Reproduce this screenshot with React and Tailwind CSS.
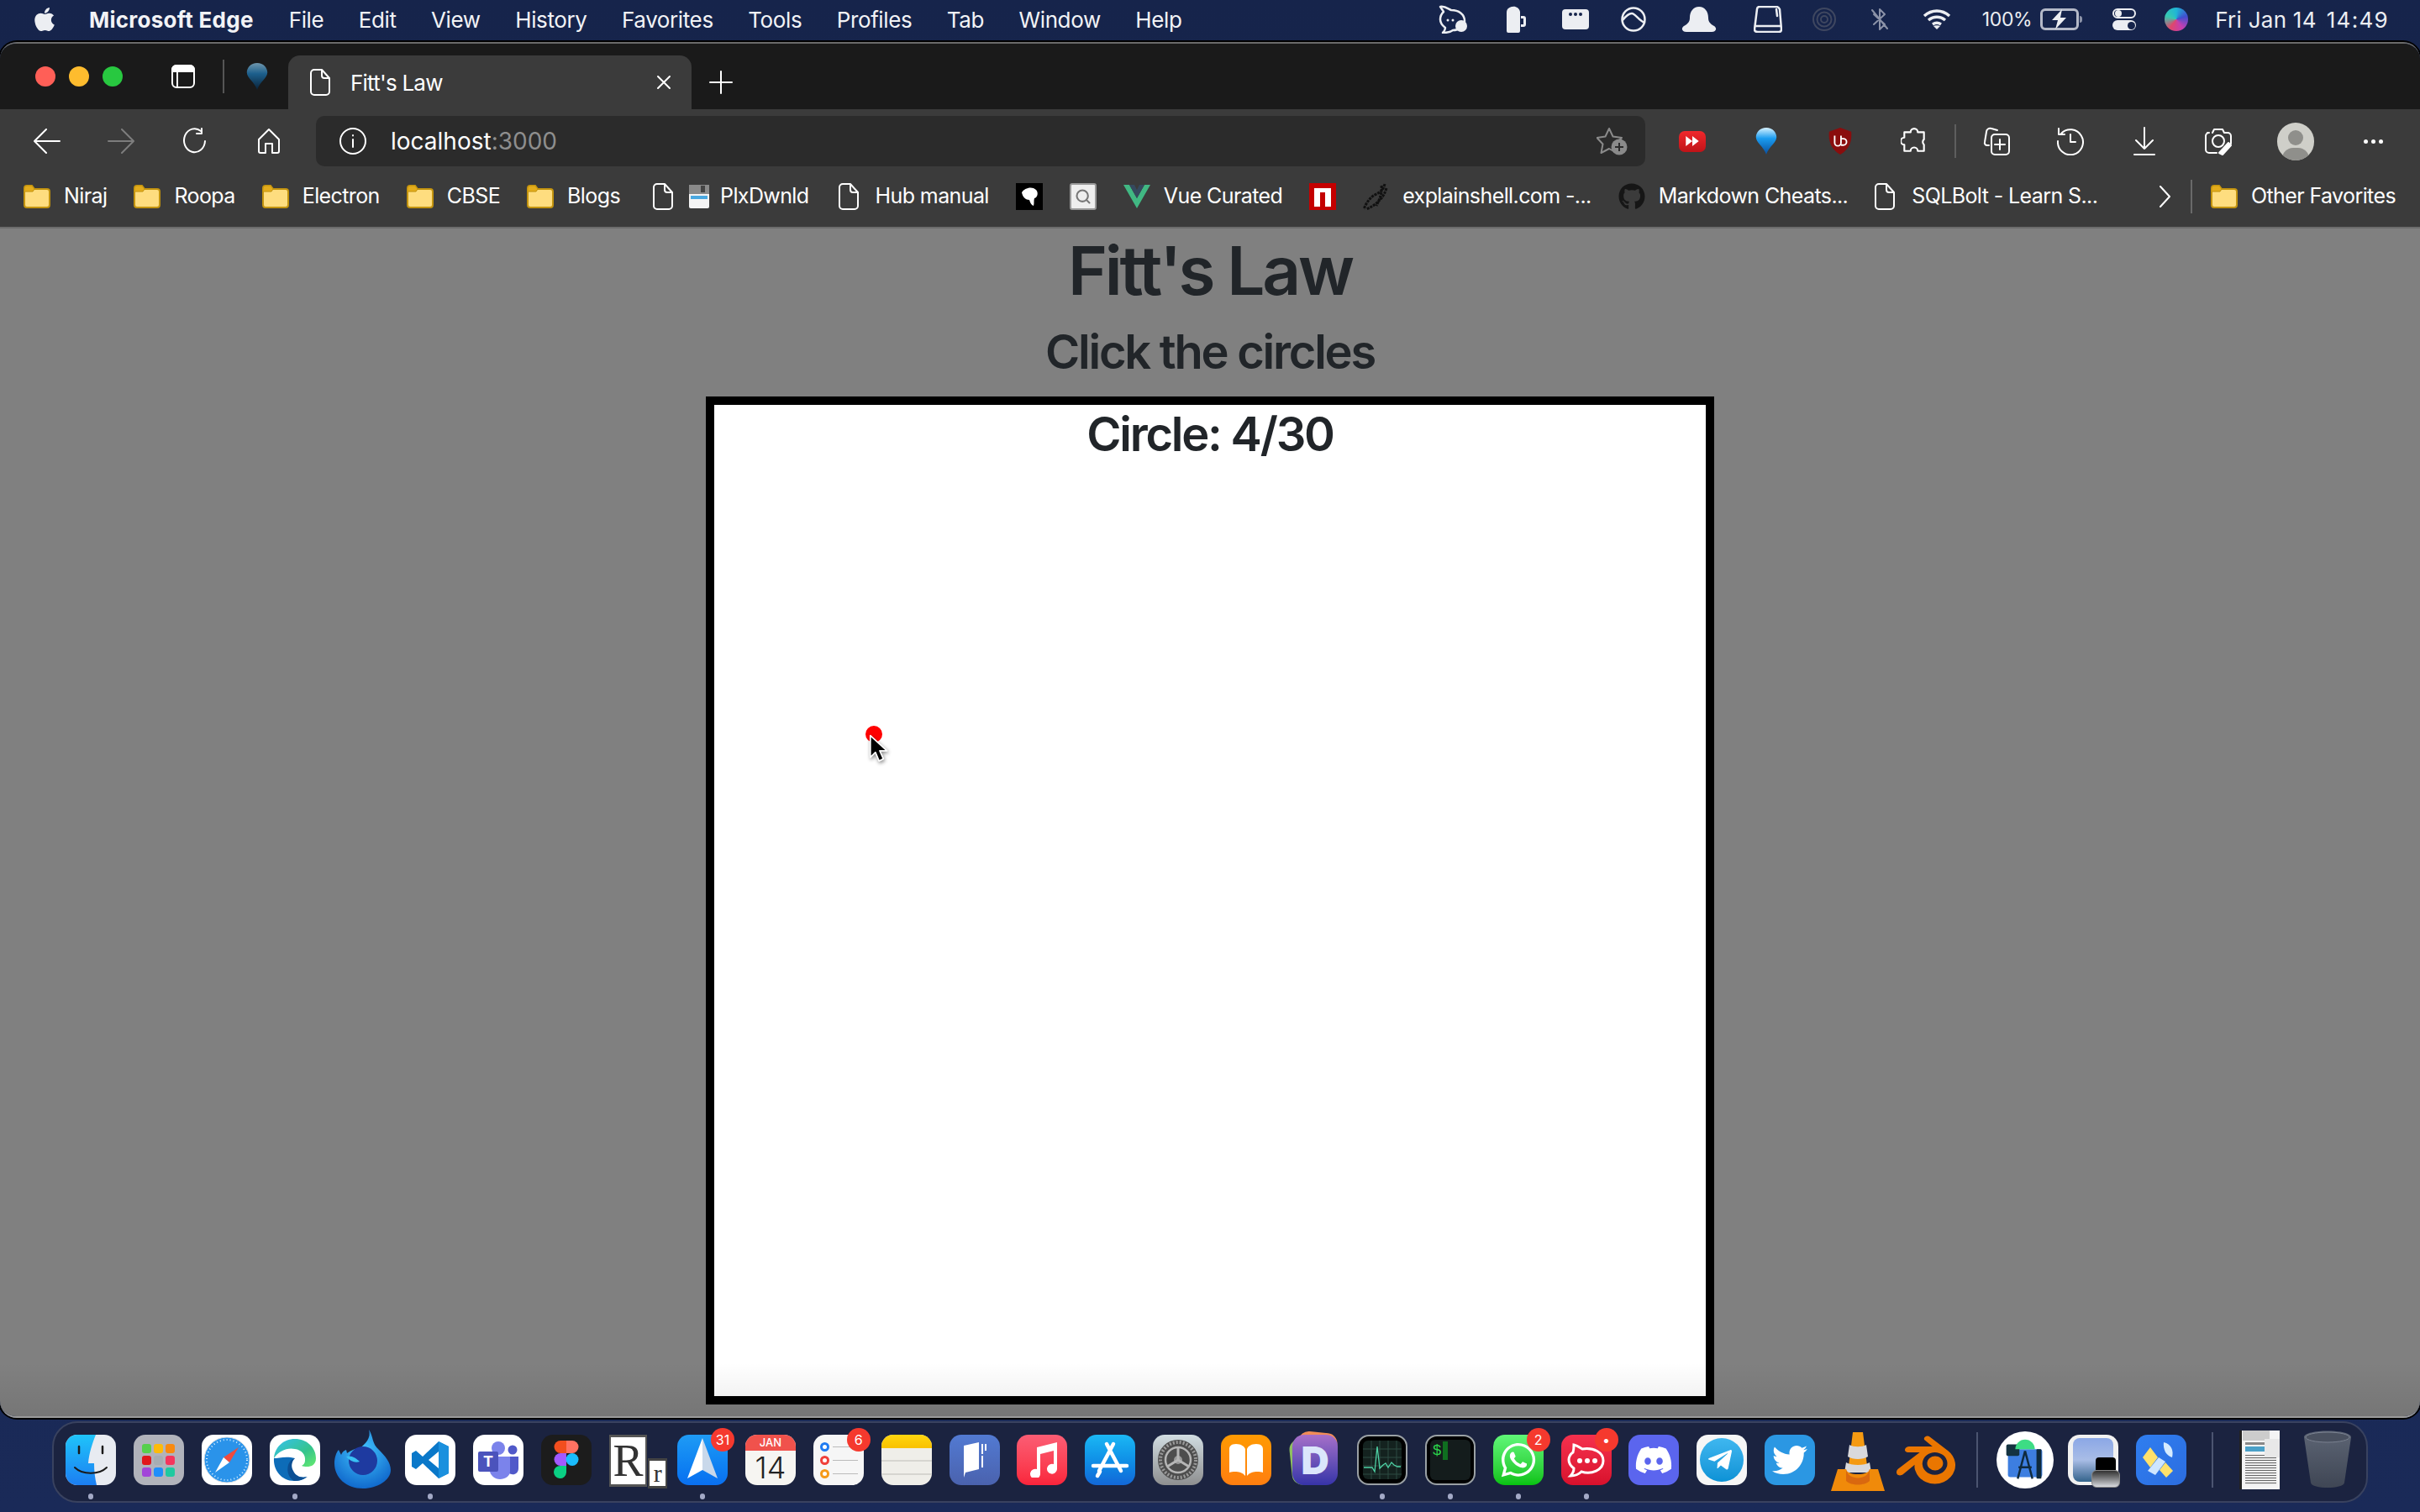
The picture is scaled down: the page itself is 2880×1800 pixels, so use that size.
import React from 'react'
import { FaApple, FaDiscord, FaGithub, FaTwitter, FaTelegramPlane, FaWhatsapp } from 'react-icons/fa'
import { SiBlender } from 'react-icons/si'
import { Search } from 'lucide-react'

const Line = ({ w, h, vb, children, className = '', sw = 2 }) => (
  <svg width={w} height={h} viewBox={vb || `0 0 ${w} ${h}`} fill="none" stroke="currentColor" strokeWidth={sw} strokeLinecap="round" strokeLinejoin="round" className={`shrink-0 ${className}`}>
    {children}
  </svg>
)

const DocIcon = () => (
  <Line w={24} h={32}>
    <path d="M5 1h9l9 10v16a4 4 0 0 1-4 4H5a4 4 0 0 1-4-4V5a4 4 0 0 1 4-4zM14 1v7a3 3 0 0 0 3 3h6" />
  </Line>
)

const Folder = () => (
  <svg width="32" height="28" viewBox="0 0 32 28" className="shrink-0">
    <path d="M1 4a3 3 0 0 1 3-3h6l3 4h15a3 3 0 0 1 3 3v16a3 3 0 0 1-3 3H4a3 3 0 0 1-3-3z" fill="#fedd7f" stroke="#c2930f" strokeWidth="2" />
    <path d="M1 9V4a3 3 0 0 1 3-3h6l3 4-2 3H2z" fill="#e3ac1c" stroke="#c2930f" strokeWidth="1" />
  </svg>
)

const Balloon = ({ dim }) => (
  <svg width="26" height="32" viewBox="0 0 26 34" className="shrink-0">
    <defs>
      <linearGradient id={dim ? 'ballonDim' : 'balloon'} x1="0" y1="0" x2="0" y2="1">
        <stop offset="0" stopColor={dim ? '#6f97ad' : '#d6f2ff'} />
        <stop offset="0.4" stopColor={dim ? '#1c5f8c' : '#1a9cf0'} />
        <stop offset="1" stopColor={dim ? '#0a2238' : '#0a4f9e'} />
      </linearGradient>
    </defs>
    <path d="M13 0C5 0 0 6 0 12c0 7 9 11 13 22 4-11 13-15 13-22C26 6 21 0 13 0z" fill={`url(#${dim ? 'ballonDim' : 'balloon'})`} />
  </svg>
)

const menuLeft = ['File', 'Edit', 'View', 'History', 'Favorites', 'Tools', 'Profiles', 'Tab', 'Window', 'Help']

const MenuBar = () => (
  <div className="flex h-[48px] shrink-0 items-center pb-[2px] text-[26px] tracking-[-0.015em] text-[#f2f3f6] [font-family:Inter,sans-serif]">
    <FaApple className="ml-[39px] h-[32px] w-[28px] shrink-0 text-[#eceef2]" />
    <span className="ml-[39px] font-bold tracking-[0.01em]">Microsoft Edge</span>
    <div className="ml-[42px] flex gap-[41.5px]">
      {menuLeft.map((m) => <span key={m}>{m}</span>)}
    </div>
    <div className="ml-auto flex items-center pr-[37px] text-[#eceef2]">
      <Line w={38} h={34} sw={2.5}>
        <path d="M4 2c6-1 10 3 13 4 9 0 16 5 16 13 0 7-7 11-14 11-4 3-9 3-12 3 2-2 3-4 3-6-4-3-6-6-6-10 0-4 2-7 4-9-1-2-3-4-4-6z" />
        <circle cx="29" cy="25" r="7" fill="currentColor" stroke="none" />
        <circle cx="13" cy="18" r="1.5" fill="currentColor" stroke="none" />
        <circle cx="19" cy="18" r="1.5" fill="currentColor" stroke="none" />
      </Line>
      <svg width="26" height="32" viewBox="0 0 26 32" fill="currentColor" className="ml-[43px] shrink-0">
        <path d="M2 8c0-5 4-7 7-7 3-1 8 1 9 6v23a2 2 0 0 1-2 2H4a2 2 0 0 1-2-2z" />
        <path d="M19 12h3a3 3 0 0 1 3 3v7a3 3 0 0 1-3 3h-3v-3h3v-7h-3z" />
      </svg>
      <div className="ml-[42px] flex h-[24px] w-[32px] shrink-0 items-start justify-center gap-[2px] rounded-[4px] bg-[#eceef2] pt-[4px]">
        <i className="h-[4px] w-[4px] rounded-full bg-[#16244b]" />
        <i className="h-[4px] w-[4px] rounded-full bg-[#16244b]" />
        <i className="h-[4px] w-[4px] rounded-full bg-[#16244b]" />
      </div>
      <Line w={30} h={30} className="ml-[38px]" sw={2.5}>
        <circle cx="15" cy="15" r="13.5" />
        <path d="M2 16c4-5 8-8 11-8 4 0 8 8 15 11" />
      </Line>
      <svg width="44" height="30" viewBox="0 0 44 30" fill="currentColor" className="ml-[41px] shrink-0">
        <path d="M22 0c7 0 11 6 11 13 0 5 2 7 7 10 4 3 2 7-3 7H7c-5 0-7-4-3-7 5-3 7-5 7-10C11 6 15 0 22 0z" />
      </svg>
      <Line w={34} h={32} className="ml-[43px]" sw={2.5}>
        <path d="M7 1h20c2 0 3 1 4 3l2 24c0 2-1 3-3 3H5c-2 0-4-1-4-3L4 4c0-2 1-3 3-3z" />
        <path d="M2 24h30M27 4l1 8" />
      </Line>
      <Line w={28} h={28} className="ml-[36px] text-[#3f4760]">
        <circle cx="14" cy="14" r="13" />
        <circle cx="14" cy="14" r="8.5" />
        <circle cx="14" cy="14" r="4" />
      </Line>
      <Line w={22} h={26} className="ml-[41px] text-[#8c93a8]">
        <path d="M4 7l13 12-6 6V1l6 6L4 19M2 2l18 22" />
      </Line>
      <svg width="34" height="24" viewBox="0 0 34 24" fill="none" stroke="currentColor" strokeWidth="3.5" className="ml-[40px] shrink-0">
        <path d="M2 8c9-8 21-8 30 0M7 13c6-5 14-5 20 0M12 18c3-2 7-2 10 0" />
        <path d="M17 24l-4-4c2-1 6-1 8 0z" fill="currentColor" stroke="none" />
      </svg>
      <span className="ml-[37px] text-[23px]">100%</span>
      <div className="relative ml-[10px] flex h-[26px] w-[46px] shrink-0 items-center justify-center rounded-[6px] border-[3px] border-[#b4b9c8]">
        <svg width="24" height="24" viewBox="0 0 24 24" fill="currentColor"><path d="M15 0L3 13h7l-3 11 13-14h-7z" /></svg>
        <i className="absolute right-[-7px] h-[8px] w-[3px] rounded-r bg-[#8c93a8]" />
      </div>
      <div className="ml-[40px] flex shrink-0 flex-col gap-[2px]">
        <div className="flex h-[12px] w-[28px] items-center justify-start rounded-full border-2 border-[#eceef2] pl-[1px]"><i className="h-[8px] w-[8px] rounded-full bg-[#eceef2]" /></div>
        <div className="flex h-[12px] w-[28px] items-center justify-end rounded-full bg-[#eceef2] pr-[1px]"><i className="h-[9px] w-[9px] rounded-full bg-[#16244b]" /></div>
      </div>
      <div className="ml-[34px] h-[28px] w-[28px] shrink-0 rounded-full bg-[conic-gradient(#1fb6d6,#3f4fd0,#c43fb0,#e0466c,#36c9b0,#1fb6d6)]" />
      <span className="ml-[32px] tracking-[0.01em]">Fri Jan 14</span>
      <span className="ml-[12px] tracking-[0.05em]">14:49</span>
    </div>
  </div>
)

const TabStrip = () => (
  <div className="flex h-[78px] shrink-0 bg-[#1a1a1a] pt-[14px] text-white">
    <div className="ml-[42px] flex h-[50px] items-center gap-[16px]">
      <i className="h-[24px] w-[24px] rounded-full bg-[#ff5f57]" />
      <i className="h-[24px] w-[24px] rounded-full bg-[#febc2e]" />
      <i className="h-[24px] w-[24px] rounded-full bg-[#28c840]" />
    </div>
    <div className="ml-[58px] flex h-[50px] items-center">
      <svg width="28" height="28" viewBox="0 0 28 28" fill="none" stroke="currentColor" strokeWidth="2">
        <rect x="1" y="1" width="26" height="26" rx="5" />
        <path d="M1 8h26" />
        <path d="M1 6a5 5 0 0 1 5-5h16a5 5 0 0 1 5 5v2H1z" fill="#fff" />
        <path d="M7 8v19" />
      </svg>
      <i className="ml-[33px] h-[40px] w-[2px] bg-[#555]" />
      <div className="ml-[26px]"><Balloon dim /></div>
    </div>
    <div className="ml-[24px] flex h-[64px] w-[480px] items-center rounded-t-[14px] bg-[#3b3b3b] pl-[26px] pr-[24px] [font-family:Inter,sans-serif]">
      <DocIcon />
      <span className="ml-[24px] text-[26px] tracking-[-0.03em]">Fitt's Law</span>
      <Line w={18} h={18} className="ml-auto"><path d="M2 2l14 14M16 2L2 16" /></Line>
    </div>
    <Line w={28} h={28} className="ml-[21px] mt-[18px]"><path d="M14 1v26M1 14h26" /></Line>
  </div>
)

const Toolbar = () => (
  <div className="flex h-[72px] shrink-0 items-center bg-[#3b3b3b] pl-[40px] pt-[4px] text-white">
    <div className="flex items-center gap-[56px]">
      <Line w={32} h={30}><path d="M31 15H2M15 1L1 15l14 14" /></Line>
      <Line w={32} h={30} className="text-[#7d7d7d]"><path d="M1 15h29M17 1l14 14-14 14" /></Line>
      <Line w={32} h={32}><path d="M28 16a12.5 14 0 1 1-5-12M24 1v6h-6" /></Line>
      <Line w={32} h={32}><path d="M16 2L4 14v14a2 2 0 0 0 2 2h6V19h8v11h6a2 2 0 0 0 2-2V14z" /></Line>
    </div>
    <div className="ml-[40px] flex h-[60px] w-[1582px] shrink-0 items-center rounded-[10px] bg-[#2b2b2b] pl-[28px] pr-[21px] [font-family:Inter,sans-serif]">
      <Line w={32} h={32}>
        <circle cx="16" cy="16" r="15" />
        <path d="M16 14v9M16 9v.5" />
      </Line>
      <span className="ml-[29px] text-[28px]">localhost<span className="text-[#8e8e8e]">:3000</span></span>
      <svg width="37" height="34" viewBox="0 0 37 34" fill="none" className="ml-auto">
        <path d="M15 2l4.500 9.500 10.500 1.500-7.500 7.500 1.500 10.500-9-5-9.500 5 2-10.500L0.500 13l10-1.500z" stroke="#8a8a8a" strokeWidth="2" strokeLinejoin="round" />
        <circle cx="27" cy="24" r="9.500" fill="#8a8a8a" />
        <path d="M27 19v10M22 24h10" stroke="#2b2b2b" strokeWidth="2" />
      </svg>
    </div>
    <div className="ml-[40px] flex items-center gap-[56px]">
      <div className="flex h-[25px] w-[32px] items-center justify-center rounded-[7px] bg-gradient-to-b from-[#f0282c] to-[#c01318]">
        <svg width="16" height="12" viewBox="0 0 18 14" fill="#fff"><path d="M0 0l9 7-9 7zM9 0l9 7-9 7z" /></svg>
      </div>
      <div className="flex w-[32px] justify-center"><Balloon /></div>
      <svg width="32" height="32" viewBox="0 0 32 34">
        <path d="M16 0l14 5c1 12-2 22-14 29C4 27 1 17 2 5z" fill="#8a0d0d" />
        <path d="M9 10v9a4 4 0 0 0 8 0v-9M17 14h3a4 4 0 0 1 0 8h-3" fill="none" stroke="#fff" strokeWidth="2" />
      </svg>
      <Line w={32} h={34} vb="0 0 30 32">
        <path d="M11 6a4 4 0 0 1 8 0h7v8a4 4 0 0 0 0 6v7h-7a4 4 0 0 0-8 0H4v-7a4 4 0 0 1 0-8V6z" />
      </Line>
    </div>
    <i className="ml-[32px] h-[40px] w-[2px] bg-[#5e5e5e]" />
    <div className="ml-[32px] flex items-center gap-[56px]">
      <Line w={32} h={34}>
        <path d="M7 22H5a3 3 0 0 1-3-4l2-12c0-3 3-5 6-4l7 2" />
        <rect x="10" y="9" width="21" height="24" rx="4" />
        <path d="M20 15v12M14 21h12" />
      </Line>
      <Line w={32} h={34}>
        <path d="M5 8a15 15 0 1 1-4 9M2 2v7h7M16 9v9h6" />
      </Line>
      <Line w={32} h={34}>
        <path d="M16 1v25M6 16l10 10 10-10M4 33h24" />
      </Line>
      <Line w={32} h={34}>
        <path d="M9 7l2-4h10l2 4h4a4 4 0 0 1 4 4v9M3 7h2a4 4 0 0 0-4 4v16a4 4 0 0 0 4 4h9" />
        <circle cx="16" cy="17" r="7" />
        <path d="M17 31l11-12 3 3-10 11z" fill="currentColor" />
      </Line>
    </div>
    <div className="relative ml-[54px] h-[45px] w-[44px] shrink-0 overflow-hidden rounded-full bg-[#cfcfc9]">
      <i className="absolute left-[13px] top-[9px] h-[18px] w-[18px] rounded-full bg-[#8f8f8b]" />
      <i className="absolute left-[6px] top-[30px] h-[26px] w-[32px] rounded-full bg-[#8f8f8b]" />
    </div>
    <div className="ml-[54px] flex w-[32px] justify-center gap-[4px]">
      <i className="h-[5px] w-[5px] rounded-full bg-white" />
      <i className="h-[5px] w-[5px] rounded-full bg-white" />
      <i className="h-[5px] w-[5px] rounded-full bg-white" />
    </div>
  </div>
)

const BlackIcon = () => (
  <div className="flex h-[32px] w-[32px] shrink-0 items-center justify-center bg-black">
    <svg width="26" height="26" viewBox="0 0 26 26" fill="#fff"><path d="M4 8c3-5 12-8 17-3 3 3 2 9-2 10-1 3 0 6-1 9-3-1-4-4-5-7-4 0-8-3-9-9z" /></svg>
  </div>
)

const Mark = ({ children, className = '' }) => (
  <div className={`flex shrink-0 items-center gap-[16px] ${className}`}>{children}</div>
)

const Bookmarks = () => (
  <div className="flex h-[70px] shrink-0 items-center border-b-2 border-[#6c6c6c] bg-[#3b3b3b] pb-[4px] pl-[28px] pr-[29px] text-[25px] tracking-[-0.024em] text-white [font-family:Inter,sans-serif]">
    <div className="flex items-center gap-[32px]">
      {['Niraj', 'Roopa', 'Electron', 'CBSE', 'Blogs'].map((n) => (
        <Mark key={n}><Folder /><span>{n}</span></Mark>
      ))}
      <Mark className="ml-[7px]">
        <DocIcon />
        <svg width="26" height="30" viewBox="0 0 26 30" className="-mr-[4px] ml-[2px]">
          <rect x="1" y="1" width="24" height="28" rx="2" fill="#f4f4f4" />
          <rect x="1" y="1" width="24" height="11" fill="#8a8a8a" />
          <rect x="15" y="2" width="5" height="8" fill="#444" />
          <rect x="3" y="14" width="20" height="4" fill="#4aa8e0" />
        </svg>
        <span>PlxDwnld</span>
      </Mark>
      <Mark className="ml-[3px]"><DocIcon /><span className="ml-[4px]">Hub manual</span></Mark>
      <BlackIcon />
      <div className="flex h-[32px] w-[32px] shrink-0 items-center justify-center rounded-[3px] border-2 border-[#999] bg-[#eee]">
        <Search size={20} color="#777" strokeWidth={2.5} />
      </div>
      <Mark>
        <svg width="32" height="28" viewBox="0 0 32 28" className="shrink-0">
          <path d="M0 0h7l9 16 9-16h7L16 28z" fill="#41b883" />
          <path d="M7 0h6l3 6 3-6h6l-9 16z" fill="#35495e" />
        </svg>
        <span>Vue Curated</span>
      </Mark>
      <div className="flex h-[32px] w-[32px] shrink-0 items-end justify-center bg-[#c40000] pb-[4px]">
        <div className="flex h-[22px] w-[20px] justify-center bg-white pt-[5px]"><i className="h-[17px] w-[6px] bg-[#c40000]" /></div>
      </div>
      <Mark>
        <svg width="31" height="32" viewBox="0 0 31 32" fill="none" stroke="#111" strokeWidth="3" strokeDasharray="3 1" className="shrink-0">
          <path d="M26 1c-2 8-6 10-12 13-5 3-10 9-13 17M28 6c-3 10-7 13-11 17-3 3-8 6-13 8M22 3c1 8-1 14-6 24" />
        </svg>
        <span>explainshell.com -...</span>
      </Mark>
      <Mark><FaGithub className="h-[32px] w-[32px] shrink-0 text-[#161616]" /><span>Markdown Cheats...</span></Mark>
      <Mark><DocIcon /><span className="ml-[4px]">SQLBolt - Learn S...</span></Mark>
    </div>
    <div className="ml-auto flex items-center">
      <Line w={15} h={26}><path d="M2 1l11 12L2 25" /></Line>
      <i className="ml-[23px] h-[40px] w-[2px] bg-[#6a6a6a]" />
      <div className="ml-[22px]"><Mark><Folder /><span>Other Favorites</span></Mark></div>
    </div>
  </div>
)

const Page = () => (
  <div className="relative flex min-h-0 flex-1 flex-col items-center bg-[#808080] pt-[2px] text-[#212529] [font-family:Inter,sans-serif]">
    <h1 className="mb-[16px] text-[80px] font-semibold leading-[96px] tracking-[-0.04em]">Fitt's Law</h1>
    <h3 className="mb-[19px] text-[56px] font-semibold leading-[67px] tracking-[-0.04em]">Click the circles</h3>
    <div className="relative h-[1200px] w-[1200px] shrink-0 border-[10px] border-black bg-white pt-[2px] text-center">
      <div className="text-[56px] font-semibold leading-[67px] tracking-[-0.04em]">Circle: 4/30</div>
      <div className="absolute left-[180px] top-[382px] h-[20px] w-[20px] rounded-full bg-[#ff0000]" />
      <svg width="26" height="38" viewBox="0 0 30 44" className="absolute left-[184px] top-[392px] drop-shadow-[1px_2px_2px_rgba(0,0,0,0.45)]">
        <path d="M2 2v30l7-7 5 12 6-3-5-11h10z" fill="#000" stroke="#fff" strokeWidth="2" strokeLinejoin="round" />
      </svg>
    </div>
    <div className="absolute inset-x-0 bottom-0 h-[64px] bg-gradient-to-b from-transparent to-[rgba(0,0,0,0.08)]" />
  </div>
)

const Tile = ({ className = '', children }) => (
  <div className={`flex h-[60px] w-[60px] items-center justify-center overflow-hidden rounded-[14px] ${className}`}>{children}</div>
)

const Finder = () => (
  <svg width="60" height="60" viewBox="0 0 60 60">
    <defs>
      <linearGradient id="finderL" x1="0" y1="0" x2="0" y2="1"><stop offset="0" stopColor="#1fc4fa" /><stop offset="1" stopColor="#1c7ef2" /></linearGradient>
    </defs>
    <rect width="60" height="60" rx="14" fill="#e8ebf1" />
    <path d="M14 0h22c-4 10-8 22-9 34h7c0 9 1 18 3 26H14A14 14 0 0 1 0 46V14A14 14 0 0 1 14 0z" fill="url(#finderL)" />
    <path d="M16 14v8M44 14v8" stroke="#1a1a1a" strokeWidth="2.5" strokeLinecap="round" />
    <path d="M11 39c9 9 29 9 38 0" stroke="#1a1a1a" strokeWidth="2" fill="none" strokeLinecap="round" />
  </svg>
)

const launchColors = ['bg-[#56d04c]', 'bg-[#fdbb0a]', 'bg-[#f98a10]', 'bg-[#e1161c]', 'bg-[#a7adb2]', 'bg-[#f5355d]', 'bg-[#a245d9]', 'bg-[#1f8efa]', 'bg-[#1fc9a0]']
const Launchpad = () => (
  <Tile className="bg-[#b1b3bb]">
    <div className="grid grid-cols-3 gap-[3px]">
      {launchColors.map((c) => <i key={c} className={`h-[11px] w-[11px] rounded-[3px] ${c}`} />)}
    </div>
  </Tile>
)

const Safari = () => (
  <Tile className="bg-white">
    <svg width="56" height="56" viewBox="0 0 56 56">
      <circle cx="28" cy="28" r="27" fill="#2a93ea" stroke="#d8dde2" />
      <circle cx="28" cy="28" r="24" fill="none" stroke="#d9efff" strokeWidth="2" strokeDasharray="1 3" />
      <path d="M42 13L24 25l7 6z" fill="#f04a3e" />
      <path d="M14 43l10-18 7 6z" fill="#fff" />
    </svg>
  </Tile>
)

const Edge = () => (
  <Tile className="bg-white">
    <svg width="52" height="52" viewBox="0 0 52 52">
      <defs>
        <linearGradient id="edgeG" x1="0" y1="0" x2="1" y2="1"><stop offset="0" stopColor="#35c1f1" /><stop offset="0.6" stopColor="#35c48c" /><stop offset="1" stopColor="#66eb6e" /></linearGradient>
      </defs>
      <path d="M26 1C12 1 2 11 1 24c6-9 16-13 25-11 8 1 13 7 12 14 0 3-2 5-4 6 6 2 17 2 17-9C51 11 40 1 26 1z" fill="url(#edgeG)" />
      <path d="M1 24c-1 14 9 27 24 27 6 0 11-1 15-5-6 2-14 0-17-7-3-6-1-13 3-15-10-3-20 0-25 0z" fill="#0d6cb8" />
      <path d="M25 51c-8-4-10-16-5-23 2-3 5-4 6-4-4 4-5 10-2 15 3 7 11 9 17 7-4 3-10 5-16 5z" fill="#0b4f94" />
    </svg>
  </Tile>
)

const Firefox = () => (
  <svg width="67" height="70" viewBox="0 0 67 70" className="-mx-[3.5px] -mt-[6px]">
    <defs>
      <radialGradient id="ffG" cx="0.5" cy="0.35" r="0.7"><stop offset="0" stopColor="#43c7ff" /><stop offset="1" stopColor="#0d63c9" /></radialGradient>
    </defs>
    <path d="M41 0c6 9 3 16 12 24 7 7 14 15 14 24 0 12-16 22-33 22C14 70 0 57 0 40c0-6 2-13 5-16l3 6c1-3 3-5 6-6l1 4c6-4 10-6 14-5 8-6 15-13 12-23z" fill="url(#ffG)" />
    <circle cx="34" cy="37" r="17" fill="#1e3aa0" />
    <path d="M14 32c6-2 12 2 16 6-5 2-11 0-16-6z" fill="#39c0f5" />
  </svg>
)

const VSCode = () => (
  <Tile className="bg-white">
    <svg width="46" height="46" viewBox="0 0 46 46">
      <path d="M33 1l12 6v32l-12 6L14 27l-8 7-5-3V15l5-3 8 7zM33 13L21 23l12 10z" fill="#0a78c9" />
      <path d="M33 1l12 6v32l-12 6z" fill="#1a90de" />
    </svg>
  </Tile>
)

const Teams = () => (
  <Tile className="bg-white">
    <svg width="48" height="46" viewBox="0 0 48 46">
      <circle cx="24" cy="9" r="8" fill="#7b83eb" />
      <circle cx="41" cy="11" r="5.5" fill="#5059c9" />
      <path d="M34 19h14v14c0 6-5 8-8 7-3 0-6-3-6-7z" fill="#5059c9" />
      <path d="M14 19h24v18c0 5-6 9-12 9s-12-5-12-10z" fill="#7b83eb" />
      <rect x="0" y="13" width="24" height="24" rx="2" fill="#4b53bc" />
      <text x="12" y="31" textAnchor="middle" fontSize="18" fontWeight="700" fill="#fff" fontFamily="Inter, sans-serif">T</text>
    </svg>
  </Tile>
)

const Figma = () => (
  <Tile className="bg-[#1c1c1c]">
    <svg width="30" height="46" viewBox="0 0 30 46">
      <path d="M8 0h7v15H8a7.5 7.5 0 0 1 0-15z" fill="#f24e1e" />
      <path d="M15 0h7a7.5 7.5 0 0 1 0 15h-7z" fill="#ff7262" />
      <path d="M8 15h7v15H8a7.5 7.5 0 0 1 0-15z" fill="#a259ff" />
      <circle cx="22" cy="22.5" r="7.5" fill="#1abcfe" />
      <path d="M8 30h7v8a7.5 7.5 0 1 1-7-8z" fill="#0acf83" />
    </svg>
  </Tile>
)

const RApp = () => (
  <div className="relative h-[64px] w-[60px] [font-family:'Liberation_Serif',serif]">
    <div className="flex h-[62px] w-[45px] items-center justify-center border-2 border-b-[3px] border-t-[3px] border-[#555] bg-white text-[54px] leading-none text-[#333]">R</div>
    <div className="absolute bottom-0 left-[46px] flex h-[36px] w-[23px] items-center justify-center border-2 border-b-[3px] border-t-[3px] border-[#444] bg-white text-[30px] leading-none text-[#333]">r</div>
  </div>
)

const Spark = () => (
  <Tile className="bg-gradient-to-b from-[#1f9bf5] to-[#0a6ff0]">
    <svg width="36" height="52" viewBox="0 0 36 52">
      <path d="M18 0L36 48 18 38z" fill="#c9d8ea" />
      <path d="M18 0L0 48l18-10z" fill="#fff" />
    </svg>
  </Tile>
)

const Calendar = () => (
  <Tile className="flex-col !justify-start bg-[#f6f5f2] [font-family:Inter,sans-serif]">
    <div className="h-[19px] w-full bg-[#f0524c] text-center text-[13px] font-medium leading-[19px] text-white">JAN</div>
    <div className="text-[36px] font-light leading-[40px] text-[#222]">14</div>
  </Tile>
)

const Reminders = () => (
  <Tile className="flex-col gap-[5px] bg-[#f6f6f6] pl-[8px] !items-start">
    {['border-[#1f7bf2]', 'border-[#f0403a]', 'border-[#f59a1a]'].map((c) => (
      <div key={c} className="flex items-center gap-[4px]">
        <i className={`h-[11px] w-[11px] rounded-full border-[3px] bg-white ${c}`} />
        <i className="h-[1px] w-[30px] bg-[#bbb]" />
      </div>
    ))}
  </Tile>
)

const Notes = () => (
  <Tile className="flex-col !justify-start bg-[#efeee9]">
    <div className="h-[16px] w-full shrink-0 bg-gradient-to-b from-[#ffd60f] to-[#f9c100]" />
    <i className="mt-[14px] h-[2px] w-full shrink-0 bg-[#d6d5d0]" />
    <i className="mt-[14px] h-[2px] w-full shrink-0 bg-[#d6d5d0]" />
  </Tile>
)

const Notebook = () => (
  <Tile className="bg-gradient-to-b from-[#527ad2] to-[#4a62ae]">
    <svg width="30" height="42" viewBox="0 0 30 42" fill="#fff">
      <path d="M2 4l18-4v32L4 36l-2 6z" />
      <path d="M23 2h2v12h-2zM27 2h2v8h-2zM23 16h2v14h-2z" />
    </svg>
  </Tile>
)

const Music = () => (
  <Tile className="bg-gradient-to-b from-[#fb5c74] to-[#fa233b]">
    <svg width="36" height="42" viewBox="0 0 36 42" fill="#fff">
      <path d="M12 6l24-6v32a6 6 0 1 1-4-6V10L16 14v24a6 6 0 1 1-4-6z" />
    </svg>
  </Tile>
)

const AppStore = () => (
  <Tile className="bg-gradient-to-b from-[#1cb8f4] to-[#1367d8]">
    <svg width="46" height="46" viewBox="0 0 46 46" stroke="#fff" strokeWidth="4.5" strokeLinecap="round" fill="none">
      <path d="M27 4L10 36M19 4l17 32M3 30h40" />
      <path d="M8 42l3-5" />
    </svg>
  </Tile>
)

const SysPrefs = () => (
  <Tile className="bg-gradient-to-b from-[#d1dde2] to-[#8e8f90]">
    <svg width="52" height="52" viewBox="0 0 52 52" fill="none">
      <circle cx="26" cy="26" r="24" fill="#4d4d4d" />
      <circle cx="26" cy="26" r="21" stroke="#9a9a9a" strokeWidth="4" strokeDasharray="2 2" />
      <circle cx="26" cy="26" r="15" stroke="#b5b5b5" strokeWidth="2.5" />
      <circle cx="26" cy="26" r="5" fill="#999" />
      <path d="M26 26V11M26 26l13 8M26 26l-13 8" stroke="#b5b5b5" strokeWidth="3" />
    </svg>
  </Tile>
)

const Books = () => (
  <Tile className="bg-gradient-to-b from-[#ff9a02] to-[#ff7e0f]">
    <svg width="44" height="38" viewBox="0 0 44 38" fill="#fff">
      <path d="M2 6c0-3 2-6 8-6 6 0 10 3 11 6v32c-3-4-8-5-12-5-3 0-5 0-7 1z" />
      <path d="M42 6c0-3-2-6-8-6-6 0-10 3-11 6v32c3-4 8-5 12-5 3 0 5 0 7 1z" />
    </svg>
  </Tile>
)

const Dash = () => (
  <div className="relative h-[60px] w-[60px]">
    <div className="absolute left-[2px] top-[4px] h-[54px] w-[52px] -rotate-6 rounded-[12px] bg-[#8fc060]" />
    <div className="absolute left-[10px] top-[-3px] h-[52px] w-[46px] rotate-6 rounded-[12px] bg-[#f08c58]" />
    <div className="absolute inset-y-0 left-[4px] right-[2px] flex items-center justify-center rounded-[14px] bg-gradient-to-b from-[#a76fc9] to-[#3733a8] text-[46px] font-black text-[#dbe6fb] [font-family:Inter,sans-serif]">D</div>
  </div>
)

const ActivityMon = () => (
  <Tile className="border-2 border-[#9aa0a4] bg-black p-[4px]">
    <svg width="46" height="46" viewBox="0 0 46 46" className="rounded-[6px] bg-[#14221f]">
      <path d="M0 10h46M0 20h46M0 30h46M0 40h46M10 0v46M20 0v46M30 0v46M40 0v46" stroke="#2c4a42" strokeWidth="1" />
      <path d="M1 32h10l3 5 3-30 3 26 4-4 3-2 3 5 4-6 3 3 4 2h4" stroke="#4ed2a5" strokeWidth="1.3" fill="none" />
    </svg>
  </Tile>
)

const Terminal = () => (
  <Tile className="border-2 border-[#9aa0a4] bg-black p-[4px]">
    <div className="flex h-full w-full items-start gap-[1px] rounded-[6px] bg-[#141c1c] pl-[3px] pt-[2px] text-[18px] leading-[22px] text-[#2bd24a] [font-family:'Liberation_Mono',monospace]">
      <span>$</span><i className="h-[22px] w-[6px] bg-[#0f6e20]" />
    </div>
  </Tile>
)

const WhatsApp = () => (
  <Tile className="bg-gradient-to-b from-[#5ff777] to-[#05c30e]">
    <FaWhatsapp className="h-[46px] w-[46px] text-white" />
  </Tile>
)

const RocketChat = () => (
  <Tile className="bg-gradient-to-b from-[#f5304e] to-[#d8102c]">
    <svg width="46" height="42" viewBox="0 0 46 42" fill="none">
      <path d="M8 3c5 1 8 4 10 5 14-2 25 4 25 14 0 11-14 17-26 13-4 4-9 5-13 5 3-3 4-6 4-9-4-3-6-6-6-10 0-4 2-7 5-9 1-3 1-6 1-9z" stroke="#fff" strokeWidth="3" />
      <circle cx="15" cy="22" r="3" fill="#fff" /><circle cx="24" cy="22" r="3" fill="#fff" /><circle cx="33" cy="22" r="3" fill="#fff" />
    </svg>
  </Tile>
)

const Discord = () => (
  <Tile className="bg-[#5b65ee]"><FaDiscord className="h-[46px] w-[46px] text-white" /></Tile>
)

const Telegram = () => (
  <Tile className="bg-[#f6f6f6]">
    <div className="flex h-[52px] w-[52px] items-center justify-center rounded-full bg-gradient-to-b from-[#3eb7f0] to-[#0a92d6]">
      <FaTelegramPlane className="-ml-[4px] h-[32px] w-[32px] text-white" />
    </div>
  </Tile>
)

const Twitter = () => (
  <Tile className="bg-[#2b97e3]"><FaTwitter className="h-[42px] w-[42px] text-white" /></Tile>
)

const Vlc = () => (
  <svg width="64" height="70" viewBox="0 0 64 70" className="-mx-[2px] -mt-[3px]">
    <path d="M26 0h12l6 48H20z" fill="#f59a12" />
    <path d="M22 15c5 3 15 3 20 0l2 14c-6 4-18 4-24 0zM18 36c6 4 22 4 28 0l2 12H16z" fill="#d9d9dc" />
    <path d="M8 44h10c1 8 27 8 28 0h10l8 26H0z" fill="#f08a0a" />
    <path d="M18 44c2 14 26 14 28 0v14c-6 6-22 6-28 0z" fill="#d9680f" />
  </svg>
)

const Blender = () => (
  <div className="flex h-[60px] w-[60px] items-center justify-center">
    <SiBlender className="h-[70px] w-[70px] shrink-0 text-[#ea7600]" />
  </div>
)

const Android = () => (
  <svg width="68" height="68" viewBox="0 0 70 70" className="-mx-[4px] -mt-[4px]">
    <circle cx="35" cy="35" r="35" fill="#fff" />
    <rect x="14" y="22" width="42" height="34" rx="3" fill="#3d7ee0" />
    <rect x="12" y="16" width="16" height="14" rx="2" fill="#143240" />
    <path d="M23 22a12 12 0 0 1 24 0z" fill="#3ddc84" />
    <path d="M35 24l-9 34M35 24l9 34M27 44h16" stroke="#0f2a3d" strokeWidth="2.5" fill="none" />
    <rect x="49" y="22" width="6" height="36" rx="1" fill="#0f2a3d" />
  </svg>
)

const Preview = () => (
  <div className="relative h-[60px] w-[60px]">
    <div className="flex h-[60px] w-[60px] items-center justify-center rounded-[14px] bg-[#f1f1f1]">
      <div className="h-[52px] w-[48px] rounded-[8px] bg-gradient-to-b from-[#8ba7e6] via-[#a9bde6] to-[#33648c]" />
    </div>
    <div className="absolute bottom-[-3px] right-[-2px] flex h-[36px] w-[34px] flex-col items-center">
      <i className="h-[16px] w-[24px] rounded-t-[4px] bg-black" />
      <i className="h-[22px] w-[34px] rounded-[6px] border border-[#888] bg-gradient-to-b from-[#333] to-[#d9dbe0]" />
    </div>
  </div>
)

const Xcodeish = () => (
  <Tile className="bg-gradient-to-br from-[#2f7ef0] to-[#2c6de0]">
    <svg width="46" height="46" viewBox="0 0 46 46">
      <path d="M10 8l9 12-9 12-9-12z" fill="#ffe16b" />
      <path d="M34 28l9 10-8 8-8-9z" fill="#ffe16b" transform="translate(-6 -2)" />
      <path d="M26 2c9 2 12 10 10 18-7-2-11-9-10-18z" fill="#d6ecff" />
      <path d="M20 20l8 5-12 16-9-5z" fill="#cfe6ff" />
    </svg>
  </Tile>
)

const DocThumb = () => (
  <div className="relative -mt-[5px] ml-[6px] h-[70px] w-[48px]">
    <div className="h-[70px] w-[48px] border-l-[3px] border-[#222] bg-[#f4f4f4] px-[4px] pt-[14px]">
      <i className="block h-[3px] w-full bg-[#888]" />
      <i className="mt-[2px] block h-[6px] w-[30px] bg-[#4aa0c8]" />
      <div className="mt-[4px] h-[36px] w-full bg-[repeating-linear-gradient(#666_0,#666_1px,#eee_1px,#eee_3px)]" />
    </div>
    <i className="absolute left-[4px] top-[0] h-[12px] w-[32px] bg-[#ccc]" />
    <i className="absolute right-[0] top-[10px] h-[22px] w-[18px] bg-[#e8e8e8]" />
  </div>
)

const Trash = () => (
  <svg width="56" height="68" viewBox="0 0 56 68" className="-mt-[5px] ml-[2px] shrink-0">
    <defs>
      <linearGradient id="trashG" x1="0" y1="0" x2="0" y2="1"><stop offset="0" stopColor="#5d6575" /><stop offset="1" stopColor="#3f4654" /></linearGradient>
    </defs>
    <path d="M0 8c0-10 56-10 56 0l-8 54c-1 8-39 8-40 0z" fill="url(#trashG)" />
    <ellipse cx="28" cy="8" rx="26" ry="6" fill="#4a5160" stroke="#7a8190" />
  </svg>
)

const apps = [
  { C: Finder, dot: true },
  { C: Launchpad },
  { C: Safari },
  { C: Edge, dot: true },
  { C: Firefox },
  { C: VSCode, dot: true },
  { C: Teams },
  { C: Figma },
  { C: RApp },
  { C: Spark, dot: true, badge: '31' },
  { C: Calendar },
  { C: Reminders, badge: '6' },
  { C: Notes },
  { C: Notebook },
  { C: Music },
  { C: AppStore },
  { C: SysPrefs },
  { C: Books },
  { C: Dash },
  { C: ActivityMon, dot: true },
  { C: Terminal, dot: true },
  { C: WhatsApp, dot: true, badge: '2' },
  { C: RocketChat, dot: true, badge: '•' },
  { C: Discord },
  { C: Telegram },
  { C: Twitter },
  { C: Vlc },
  { C: Blender },
]

const DockItem = ({ C, dot, badge }) => (
  <div className="relative h-[60px] w-[60px] shrink-0">
    <C />
    {badge && (
      <span className="absolute right-[-8px] top-[-8px] flex h-[28px] w-[28px] items-center justify-center rounded-full bg-[#f5392e] text-[16px] text-white [font-family:Inter,sans-serif]">{badge}</span>
    )}
    {dot && <i className="absolute bottom-[-17px] left-[27px] h-[7px] w-[6px] rounded-full bg-[#a3a9c6]" />}
  </div>
)

const Dock = () => (
  <div className="ml-[62px] mt-[4px] flex h-[97px] w-[2756px] shrink-0 items-center gap-[20.9px] rounded-[30px] border-2 border-[#39425f] bg-[#1b2340] pb-[5px] pl-[14px]">
    {apps.map((a, i) => <DockItem key={i} {...a} />)}
    <i className="ml-[9px] mr-[5px] h-[66px] w-[2px] shrink-0 bg-[#4b5470]" />
    <DockItem C={Android} />
    <DockItem C={Preview} />
    <DockItem C={Xcodeish} />
    <i className="ml-[9px] mr-[5px] h-[66px] w-[2px] shrink-0 bg-[#4b5470]" />
    <DockItem C={DocThumb} />
    <DockItem C={Trash} />
  </div>
)

export default function App() {
  return (
    <div className="flex h-[1800px] w-[2880px] flex-col overflow-hidden bg-gradient-to-b from-[#16244b] to-[#1a2a58]">
      <MenuBar />
      <div className="mt-[2px] flex h-[1638px] shrink-0 flex-col overflow-hidden rounded-[20px] border-t-2 border-b-2 border-t-[#6a6a6a] border-b-[#9a9a9a] shadow-[0_0_0_2px_#000]">
        <TabStrip />
        <Toolbar />
        <Bookmarks />
        <Page />
      </div>
      <Dock />
    </div>
  )
}
